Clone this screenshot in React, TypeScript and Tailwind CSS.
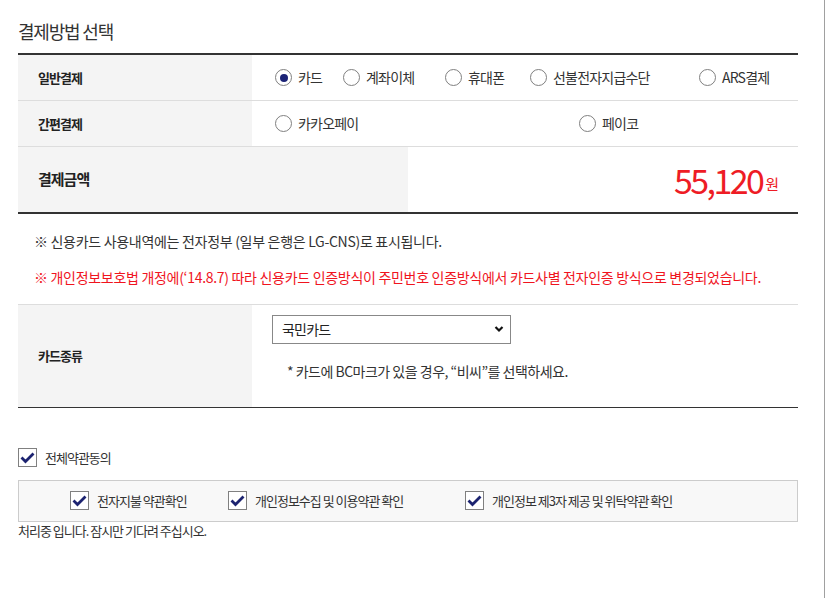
import React from 'react'

const font = { fontFamily: '"Noto Sans CJK KR", "Noto Sans", sans-serif' }

function Radio({ label, checked, width }: { label: string; checked?: boolean; width: string }) {
    return (
        <label className={`flex items-center gap-[6px] ${width}`}>
            <span className="flex h-[17px] w-[17px] shrink-0 items-center justify-center rounded-full border border-[#808080] bg-white">
                {checked && <span className="h-[8px] w-[8px] rounded-full bg-[#1b2376]" />}
            </span>
            <span className="text-[14px] tracking-[-0.8px] text-[#333]">{label}</span>
        </label>
    )
}

function Check({ label, className = '' }: { label: string; className?: string }) {
    return (
        <label className={`flex items-center gap-[8px] ${className}`}>
            <span className="flex h-[19px] w-[19px] shrink-0 items-center justify-center border border-[#808080] bg-white">
                <svg width="15" height="12" viewBox="0 0 15 12">
                    <polyline points="1.5,5.5 5.5,9.5 13.5,1.5" fill="none" stroke="#1c2370" strokeWidth="2.8" />
                </svg>
            </span>
            <span className="text-[13px] tracking-[-1px] text-[#333]">{label}</span>
        </label>
    )
}

export default function App() {
    return (
        <div style={font} className="h-[598px] w-[825px] border-r border-[#a0a0a0] bg-white">
            <div className="ml-[18px] w-[780px]">
                <h2 className="flex h-[53px] items-center pt-[10px] text-[18px] font-normal tracking-[-1.2px] text-[#333]">결제방법 선택</h2>

                {/* 결제수단 */}
                <div className="border-t-2 border-[#333]">
                    <div className="flex h-[46px] border-b border-[#ddd]">
                        <div className="flex w-[234px] items-center bg-[#f4f4f4] pl-[20px] text-[13px] font-bold tracking-[-1px] text-[#222]">일반결제</div>
                        <div className="flex flex-1 items-center pl-[23px]">
                            <Radio label="카드" checked width="w-[68px]" />
                            <Radio label="계좌이체" width="w-[102px]" />
                            <Radio label="휴대폰" width="w-[85px]" />
                            <Radio label="선불전자지급수단" width="w-[169px]" />
                            <Radio label="ARS결제" width="w-[90px]" />
                        </div>
                    </div>
                    <div className="flex h-[46px] border-b border-[#ddd]">
                        <div className="flex w-[234px] items-center bg-[#f4f4f4] pl-[20px] text-[13px] font-bold tracking-[-1px] text-[#222]">간편결제</div>
                        <div className="flex flex-1 items-center pl-[23px]">
                            <Radio label="카카오페이" width="w-[304px]" />
                            <Radio label="페이코" width="w-[100px]" />
                        </div>
                    </div>
                    <div className="flex h-[67px] border-b-2 border-[#333]">
                        <div className="flex w-[390px] items-center bg-[#f4f4f4] pl-[20px] text-[15px] font-bold tracking-[-1px] text-[#222]">결제금액</div>
                        <div className="flex flex-1 items-center justify-end pr-[20px] text-[#ee1c25]">
                            <span className="text-[34px] leading-none tracking-[-2.6px]">55,120</span>
                            <span className="ml-[3px] mt-[10px] text-[15px] tracking-[-1px]">원</span>
                        </div>
                    </div>
                </div>

                {/* 안내 */}
                <div className="border-b border-[#ddd] px-[16px] pb-[17px] pt-[17px] text-[14px] leading-[20px] tracking-[-0.3px]">
                    <p className="text-[#333]">※ 신용카드 사용내역에는 전자정부 (일부 은행은 LG-CNS)로 표시됩니다.</p>
                    <p className="mt-[16px] text-[#f0141e]">※ 개인정보보호법 개정에(‘14.8.7) 따라 신용카드 인증방식이 주민번호 인증방식에서 카드사별 전자인증 방식으로 변경되었습니다.</p>
                </div>

                {/* 카드종류 */}
                <div className="flex h-[103px] border-b border-[#333]">
                    <div className="flex w-[234px] items-center bg-[#f4f4f4] pl-[20px] text-[13px] font-bold tracking-[-1px] text-[#222]">카드종류</div>
                    <div className="flex-1 pl-[20px] pt-[10px]">
                        <div className="relative w-[239px]">
                            <select className="h-[29px] w-full appearance-none border border-[#888] bg-white pl-[9px] text-[14px] tracking-[-0.8px] text-[#222] outline-none">
                                <option>국민카드</option>
                            </select>
                            <svg className="pointer-events-none absolute right-[7px] top-[10px]" width="10" height="8" viewBox="0 0 10 8">
                                <polyline points="1.5,2 5,5.5 8.5,2" fill="none" stroke="#111" strokeWidth="2.2" />
                            </svg>
                        </div>
                        <p className="mt-[17px] pl-[15px] text-[14px] tracking-[-0.5px] text-[#333]">* 카드에 BC마크가 있을 경우, “비씨”를 선택하세요.</p>
                    </div>
                </div>

                {/* 약관 */}
                <div className="mt-[40px]">
                    <Check label="전체약관동의" />
                </div>
                <div className="mt-[12px] flex h-[42px] items-center border border-[#ccc] bg-[#f8f8f8] pl-[51px]">
                    <Check label="전자지불 약관확인" className="w-[158px]" />
                    <Check label="개인정보수집 및 이용약관 확인" className="w-[237px]" />
                    <Check label="개인정보 제3자 제공 및 위탁약관 확인" />
                </div>
                <p className="text-[13px] leading-[18px] tracking-[-1px] text-[#333]">처리중 입니다. 잠시만 기다려 주십시오.</p>
            </div>
        </div>
    )
}
